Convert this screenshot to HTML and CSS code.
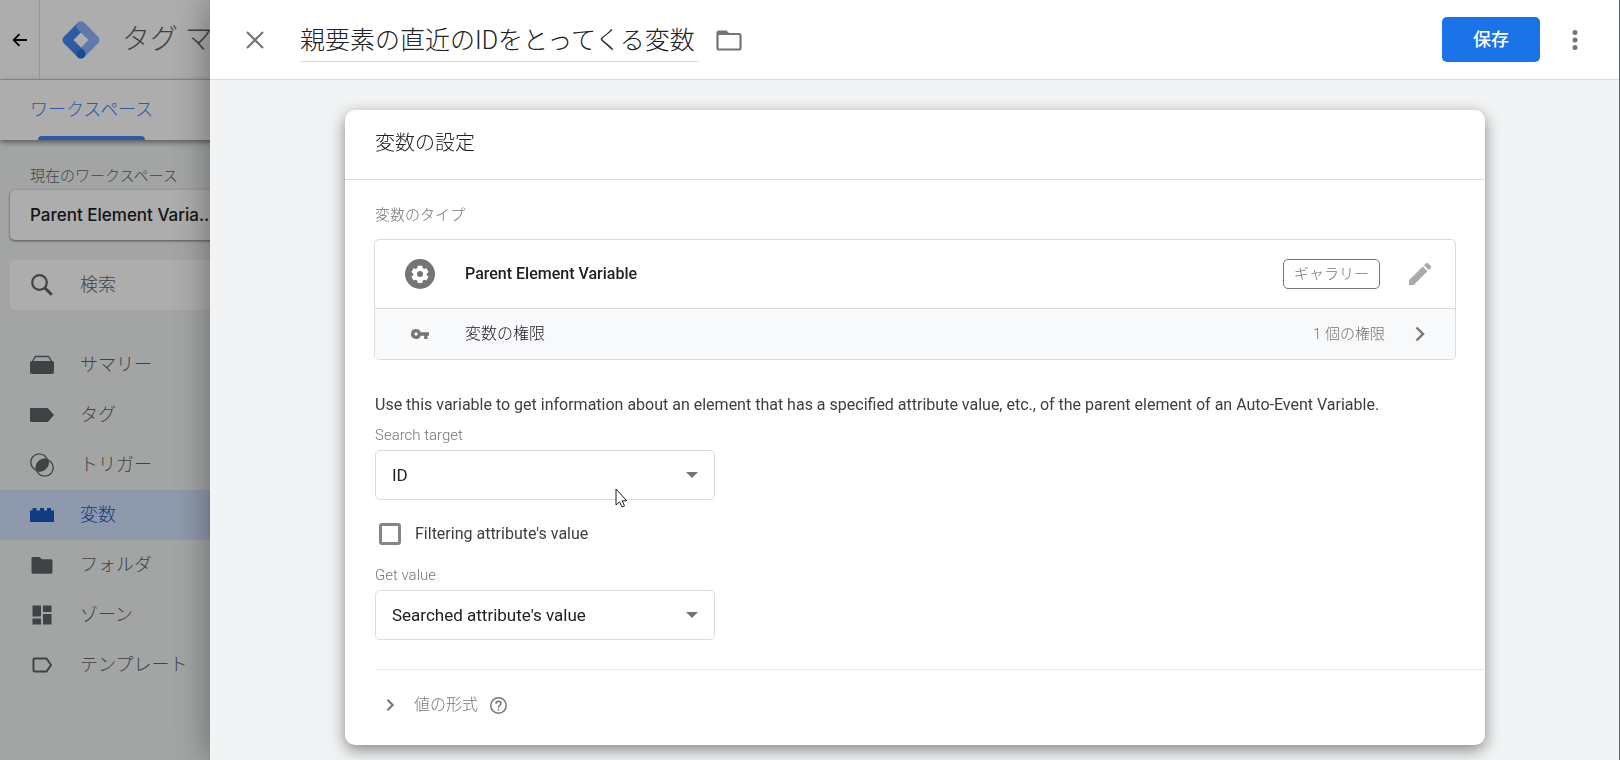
FILE: index.html
```html
<!DOCTYPE html>
<html lang="ja">
<head>
<meta charset="utf-8">
<meta name="viewport" content="width=device-width, initial-scale=1">
<title>タグ マネージャー</title>
<link rel="stylesheet" href="styles.css">
</head>
<body>
<div class="app">
  <header class="app-bar">
    <button class="back" type="button" aria-label="戻る">
      <svg width="20" height="20" viewBox="0 0 20 20" fill="none" stroke="currentColor" stroke-width="1.8"><path d="M17 10H4M9.500 4.200L3.700 10l5.800 5.800"/></svg>
    </button>
    <div class="brand">
      <svg width="38" height="38" viewBox="0 0 38 38">
        <path d="M19 5L33 19 19 33" fill="none" stroke="#8ab4f8" stroke-width="9" stroke-linejoin="round" stroke-linecap="round"/>
        <path d="M19 5L5 19 19 33" fill="none" stroke="#4285f4" stroke-width="9" stroke-linejoin="round" stroke-linecap="butt"/>
        <path d="M15.800 1.800a4.500 4.500 0 0 1 6.400 0l7 7-6.400 6.400-7-7a4.500 4.500 0 0 1 0-6.400z" fill="#8ab4f8"/>
        <circle cx="19" cy="33" r="4.500" fill="#246fdb"/>
      </svg>
      <span class="brand-name">タグ マ</span>
    </div>
  </header>
  <nav class="tabs"><a class="tab" href="#workspace">ワークスペース</a></nav>
  <aside class="side">
    <p class="side-label">現在のワークスペース</p>
    <button class="workspace" type="button">Parent Element Varia...</button>
    <label class="search">
      <svg width="24" height="24" viewBox="0 0 24 24" fill="none" stroke="currentColor" stroke-width="2.200"><circle cx="9.500" cy="9.500" r="7.300"/><path d="M14.700 14.700l7 7" stroke-width="3"/></svg>
      <input type="search" placeholder="検索" aria-label="検索">
    </label>
    <ul class="menu">
      <li><a class="item" href="#overview"><svg width="24" height="24" viewBox="0 0 24 24"><path d="M5.500 3.500h13L22 9H2z" fill="none" stroke="currentColor" stroke-width="1.300"/><rect y="8" width="24" height="13" rx="2" fill="currentColor"/></svg>サマリー</a></li>
      <li><a class="item" href="#tags"><svg width="24" height="24" viewBox="0 0 24 24" fill="currentColor"><path d="M1 5h16q1 0 1.500.8L24 12l-5.500 6.200q-.5.800-1.500.8H1q-1 0-1-1V6q0-1 1-1z"/></svg>タグ</a></li>
      <li><a class="item" href="#triggers"><svg width="24" height="24" viewBox="0 0 24 24" fill="none" stroke="currentColor" stroke-width="1.300"><circle cx="9.300" cy="9.300" r="8.500"/><circle cx="14.700" cy="14.700" r="8.500"/><path d="M17.800 6.800A8.500 8.500 0 0 0 6.800 17.400 8.500 8.500 0 0 0 17.800 6.800z" fill="currentColor"/></svg>トリガー</a></li>
      <li><a class="item current" href="#variables" aria-current="page"><svg width="24" height="24" viewBox="0 0 24 24" fill="currentColor"><path d="M0 7.500h2.500V5h4v2.500H10V5h4v2.500h3V5h4v2.500h3V19H0z"/></svg>変数</a></li>
      <li><a class="item" href="#folders"><svg width="24" height="24" viewBox="0 0 24 24" fill="currentColor"><path d="M3 4h6.500l2.500 2.200h9q1.500 0 1.500 1.500V19q0 1.800-1.500 1.800H3Q1.500 20.800 1.500 19V5.500Q1.500 4 3 4z"/></svg>フォルダ</a></li>
      <li><a class="item" href="#zones"><svg width="24" height="24" viewBox="0 0 24 24" fill="currentColor"><path d="M2.500 2.500h8.500v11H2.500zM13 2.500h8.500V9H13zM2.500 15.500h8.500v6H2.500zM13 11h8.500v10.500H13z"/></svg>ゾーン</a></li>
      <li><a class="item" href="#templates"><svg width="24" height="24" viewBox="0 0 24 24" fill="none" stroke="currentColor" stroke-width="2"><path d="M4.500 5.500h12L21 12l-4.500 6.500h-12q-1 0-1-1v-11q0-1 1-1z"/></svg>テンプレート</a></li>
    </ul>
  </aside>
</div>
<div class="scrim"></div>
<main class="sheet">
  <header class="sheet-bar">
    <button class="icon-button" type="button" aria-label="閉じる">
      <svg width="20" height="20" viewBox="0 0 20 20" fill="none" stroke="currentColor" stroke-width="2.200"><path d="M2 2l16 16M18 2L2 18"/></svg>
    </button>
    <h1 class="title">親要素の直近のIDをとってくる変数</h1>
    <button class="icon-button folder" type="button" aria-label="フォルダ">
      <svg width="26" height="22" viewBox="0 0 26 22"><path d="M3 2.500h7l2.500 2.500H23q1.500 0 1.500 1.500v12.500q0 1.500-1.500 1.500H3q-1.500 0-1.500-1.500V4Q1.500 2.500 3 2.500z" fill="none" stroke="currentColor" stroke-width="2.200"/><path d="M2 2.500h8l2.500 3.500H2z" fill="currentColor"/></svg>
    </button>
    <button class="save" type="button">保存</button>
    <button class="icon-button" type="button" aria-label="その他">
      <svg width="20" height="20" viewBox="0 0 20 20" fill="currentColor"><circle cx="10" cy="2.500" r="2.500"/><circle cx="10" cy="10" r="2.500"/><circle cx="10" cy="17.500" r="2.500"/></svg>
    </button>
  </header>
  <div class="sheet-body">
    <section class="card">
      <h2 class="card-title">変数の設定</h2>
      <div class="card-body">
        <p class="caption type-caption">変数のタイプ</p>
        <div class="type-box">
          <div class="type-row">
            <span class="lead"><svg width="30" height="30" viewBox="0 0 30 30"><circle cx="15" cy="15" r="15" fill="#757575"/><path d="M12.800 6.800h4.400l.5 2.300 1.500.9 2.200-.8 2.200 3.800-1.800 1.500v1.800l1.800 1.500-2.200 3.800-2.200-.8-1.500.9-.5 2.300h-4.400l-.5-2.300-1.500-.9-2.200.8-2.200-3.800 1.800-1.500v-1.800l-1.800-1.500 2.200-3.800 2.200.8 1.500-.9z" fill="#fff"/><circle cx="15" cy="15" r="3" fill="#757575"/></svg></span>
            <strong class="type-name">Parent Element Variable</strong>
            <span class="chip">ギャラリー</span>
            <button class="icon-button pencil" type="button" aria-label="編集">
              <svg width="24" height="24" viewBox="0 0 24 24" fill="currentColor"><path d="M1 18.300L14.700 4.600l4.700 4.700L5.700 23H1zM16 3.300l2-2q1-1 2 0L22.700 4q1 1 0 2l-2 2z"/></svg>
            </button>
          </div>
          <div class="type-row permission">
            <span class="lead"><svg width="18" height="12" viewBox="0 0 18 12"><path d="M5 1a5 5 0 0 1 4.700 3.300H18v3.400h-1.500V11h-3.300V7.700H9.700A5 5 0 1 1 5 1zm0 3.300a1.700 1.700 0 1 0 0 3.400 1.700 1.700 0 0 0 0-3.400z" fill="#757575"/></svg></span>
            <span class="permission-name">変数の権限</span>
            <span class="count">1 個の権限</span>
            <button class="icon-button next" type="button" aria-label="権限を開く">
              <svg width="16" height="16" viewBox="0 0 16 16" fill="none" stroke="currentColor" stroke-width="2.400"><path d="M4.500 1.500L11 8l-6.500 6.500"/></svg>
            </button>
          </div>
        </div>
        <p class="description">Use this variable to get information about an element that has a specified attribute value, etc., of the parent element of an Auto-Event Variable.</p>
        <label class="caption" for="target">Search target</label>
        <div class="select">
          <select id="target"><option>ID</option></select>
          <svg class="arrow" width="12" height="6" viewBox="0 0 12 6"><path d="M0 0h12L6 6z" fill="#757575"/></svg>
          <svg class="pointer" width="13" height="20" viewBox="0 0 13 20"><path d="M1 1v16l3.600-3.200L7 19l2.500-1.200-2.300-5h4.500z" fill="#fff" stroke="#1b1b2b"/></svg>
        </div>
        <label class="check"><input type="checkbox">Filtering attribute's value</label>
        <label class="caption" for="value">Get value</label>
        <div class="select">
          <select id="value"><option>Searched attribute's value</option></select>
          <svg class="arrow" width="12" height="6" viewBox="0 0 12 6"><path d="M0 0h12L6 6z" fill="#757575"/></svg>
        </div>
        <div class="format">
          <button class="format-toggle" type="button">
            <svg width="12" height="12" viewBox="0 0 12 12" fill="none" stroke="currentColor" stroke-width="2"><path d="M3.500 0.800L8.700 6l-5.200 5.200"/></svg>
            値の形式
          </button>
          <button class="help" type="button" aria-label="ヘルプ">
            <svg width="17" height="17" viewBox="0 0 17 17" fill="none" stroke="currentColor" stroke-width="1.500"><circle cx="8.500" cy="8.500" r="7.700"/><path d="M6 6.800Q6 4.300 8.500 4.300T11 6.600Q11 7.600 9.800 8.400T8.500 10.600M8.500 11.800v1.600"/></svg>
          </button>
        </div>
      </div>
    </section>
  </div>
</main>
</body>
</html>
```
FILE: styles.css
```css
* { box-sizing: border-box; }
body {
  margin: 0;
  height: 100vh;
  overflow: hidden;
  background: #f1f3f4;
  color: #202124;
  font: 300 16px/20px Roboto, "Noto Sans CJK JP", sans-serif;
}
h1, h2, p, ul { margin: 0; padding: 0; font-weight: inherit; }
button, input, select { font: inherit; color: inherit; background: none; border: 0; margin: 0; padding: 0; }
a { color: inherit; text-decoration: none; }
svg { display: block; flex: none; }

.app { min-height: 100vh; }
.app-bar { display: flex; height: 80px; background: #fff; border-bottom: 1px solid #dadce0; }
.back { display: flex; align-items: center; justify-content: center; width: 40px; border-right: 1px solid #dadce0; color: #000; }
.brand { display: flex; align-items: center; gap: 22px; padding-left: 22px; color: #5f6368; }
.brand-name { font-size: 28px; line-height: 36px; white-space: nowrap; }
.tabs { display: flex; height: 60px; padding-left: 30px; background: #fff; box-shadow: 0 2px 6px rgba(0, 0, 0, .5); }
.tab { display: flex; flex-direction: column; justify-content: space-between; padding-top: 17px; color: #4285f4; font-size: 18px; line-height: 26px; }
.tab::after { content: ""; height: 4px; margin: 0 8px; background: #4285f4; border-radius: 4px 4px 0 0; }
.side { padding-top: 26px; }
.side-label { padding-left: 30px; height: 24px; color: #5f6368; font-size: 15px; }
.workspace {
  display: block; width: 260px; height: 50px; margin-left: 10px; padding-left: 20px;
  text-align: left; background: #fff; border-radius: 5px; box-shadow: 0 1px 3px rgba(0, 0, 0, .5);
  font: 500 17px/24px Inter, "Noto Sans CJK JP", sans-serif; white-space: nowrap;
}
.search { display: flex; align-items: center; gap: 26px; width: 260px; height: 50px; margin: 20px 0 30px 10px; padding-left: 20px; background: #fff; border-radius: 5px; color: #5f6368; }
.search input { width: 150px; font-size: 18px; outline: 0; }
.search input::placeholder { color: #5f6368; opacity: 1; }
.menu { list-style: none; }
.item { display: flex; align-items: center; gap: 26px; height: 50px; padding-left: 30px; color: #5f6368; font-size: 18px; }
.current { background: #d2e3fc; color: #185abc; }

.scrim { position: fixed; inset: 0; background: rgba(0, 0, 0, .32); }

.sheet {
  position: fixed; top: 0; right: 0; bottom: 0; left: 210px; overflow: hidden;
  background: #f1f3f4; border-right: 1px solid #5f6368; box-shadow: 0 0 36px rgba(0, 0, 0, .4);
}
.sheet-bar { display: flex; align-items: center; height: 80px; padding: 0 24px 0 25px; background: #fff; border-bottom: 1px solid #dadce0; }
.icon-button { display: flex; align-items: center; justify-content: center; width: 40px; height: 40px; color: #757575; }
.title { margin-left: 25px; padding: 4px 4px 0 0; border-bottom: 1px solid #dadce0; font-size: 25px; line-height: 40px; white-space: nowrap; }
.folder { margin-left: 10px; }
.save { margin: 0 15px 0 auto; width: 98px; height: 45px; background: #1a73e8; border-radius: 5px; color: #fff; font-size: 18px; font-weight: 500; }

.sheet-body { padding: 30px 134px 30px 135px; }
.card { background: #fff; border-radius: 10px; box-shadow: 0 5px 16px rgba(0, 0, 0, .45); }
.card-title { height: 70px; padding: 18px 30px; border-bottom: 1px solid #dadce0; font-size: 20px; line-height: 30px; }
.card-body { padding: 25px 0 0 30px; }
.caption { display: block; color: #757575; font-size: 15px; }
.type-caption { height: 34px; }
.type-box { margin: 0 29px 0 -1px; border: 1px solid #dadce0; border-radius: 5px; overflow: hidden; }
.type-row { display: flex; align-items: center; height: 68px; padding-right: 15px; }
.lead { display: flex; justify-content: center; width: 90px; flex: none; }
.type-name { font-size: 16px; font-weight: 500; margin-right: auto; }
.chip { padding: 4px 10px; border: 1px solid #757575; border-radius: 5px; color: #757575; font-size: 15px; }
.pencil { margin-left: 20px; color: #aaa; }
.permission { height: 51px; background: #f8f9fa; border-top: 1px solid #dadce0; }
.permission-name { margin-right: auto; }
.count { color: #757575; font-size: 15px; }
.next { margin-left: 15px; }
.description { margin: 35px 0 10px; font-weight: 400; color: #3c4043; }
.select { position: relative; width: 340px; height: 50px; margin-top: 5px; }
.select select { appearance: none; width: 100%; height: 100%; padding: 0 40px 0 16px; border: 1px solid #dadce0; border-radius: 5px; font-size: 17px; font-weight: 400; }
.arrow { position: absolute; top: 22px; right: 17px; pointer-events: none; }
.pointer { position: absolute; top: 38px; left: 240px; pointer-events: none; }
.check { display: flex; align-items: center; gap: 14px; height: 24px; margin: 22px 0 19px 4px; font-weight: 400; color: #3c4043; }
.check input { appearance: none; width: 22px; height: 22px; border: 3px solid #80868b; border-radius: 3px; }
.format { display: flex; align-items: center; gap: 12px; height: 76px; margin-top: 29px; padding-bottom: 6px; border-top: 1px solid #e8eaed; color: #757575; }
.format-toggle { display: flex; align-items: center; gap: 18px; padding-left: 9px; }
.help { padding-top: 2px; color: inherit; }
```
